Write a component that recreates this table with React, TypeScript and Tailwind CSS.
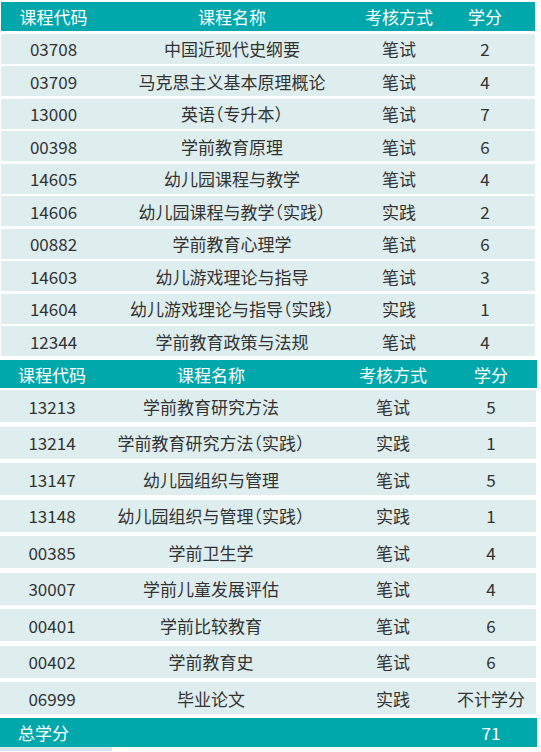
import React from 'react';

type Course = { code: string; name: string; method: string; credit: string };

const partOne: Course[] = [
    { code: '03708', name: '中国近现代史纲要', method: '笔试', credit: '2' },
    { code: '03709', name: '马克思主义基本原理概论', method: '笔试', credit: '4' },
    { code: '13000', name: '英语（专升本）', method: '笔试', credit: '7' },
    { code: '00398', name: '学前教育原理', method: '笔试', credit: '6' },
    { code: '14605', name: '幼儿园课程与教学', method: '笔试', credit: '4' },
    { code: '14606', name: '幼儿园课程与教学（实践）', method: '实践', credit: '2' },
    { code: '00882', name: '学前教育心理学', method: '笔试', credit: '6' },
    { code: '14603', name: '幼儿游戏理论与指导', method: '笔试', credit: '3' },
    { code: '14604', name: '幼儿游戏理论与指导（实践）', method: '实践', credit: '1' },
    { code: '12344', name: '学前教育政策与法规', method: '笔试', credit: '4' },
];

const partTwo: Course[] = [
    { code: '13213', name: '学前教育研究方法', method: '笔试', credit: '5' },
    { code: '13214', name: '学前教育研究方法（实践）', method: '实践', credit: '1' },
    { code: '13147', name: '幼儿园组织与管理', method: '笔试', credit: '5' },
    { code: '13148', name: '幼儿园组织与管理（实践）', method: '实践', credit: '1' },
    { code: '00385', name: '学前卫生学', method: '笔试', credit: '4' },
    { code: '30007', name: '学前儿童发展评估', method: '笔试', credit: '4' },
    { code: '00401', name: '学前比较教育', method: '笔试', credit: '6' },
    { code: '00402', name: '学前教育史', method: '笔试', credit: '6' },
    { code: '06999', name: '毕业论文', method: '实践', credit: '不计学分' },
];

const cell = 'flex items-center justify-center whitespace-nowrap';
// half-width brackets, like the source table
const nameCell = `${cell} [font-feature-settings:'halt']`;

export default function App() {
    return (
        <div
            className="w-[541px] h-[752px] bg-white overflow-hidden text-[17px] leading-none"
            style={{ fontFamily: '"Noto Sans CJK SC", "Noto Sans", sans-serif' }}
        >
            {/* First block */}
            <div className="ml-[1px] w-[534px] pt-[2px] flex flex-col gap-[2.5px]">
                <div className="grid grid-cols-[105px_252px_82px_90px] h-[29px] bg-[#00a7ab] text-white">
                    <div className={cell}>课程代码</div>
                    <div className={cell}>课程名称</div>
                    <div className={cell}>考核方式</div>
                    <div className={cell}>学分</div>
                </div>
                {partOne.map((c) => (
                    <div key={c.code} className="grid grid-cols-[105px_252px_82px_90px] h-[30px] bg-[#deeeee] text-[#333333]">
                        <div className={cell}>{c.code}</div>
                        <div className={nameCell}>{c.name}</div>
                        <div className={cell}>{c.method}</div>
                        <div className={cell}>{c.credit}</div>
                    </div>
                ))}
            </div>

            {/* Second block */}
            <div className="mt-[4px] w-[537px] flex flex-col">
                <div className="grid grid-cols-[104px_214px_150px_46px] h-[28px] bg-[#00a7ab] text-white">
                    <div className={cell}>课程代码</div>
                    <div className={cell}>课程名称</div>
                    <div className={cell}>考核方式</div>
                    <div className={cell}>学分</div>
                </div>
                <div className="mt-[2px] flex flex-col gap-[4.5px]">
                    {partTwo.map((c) => (
                        <div key={c.code} className="grid grid-cols-[104px_214px_150px_46px] h-[32px] w-[536px] bg-[#deeeee] text-[#333333]">
                            <div className={cell}>{c.code}</div>
                            <div className={nameCell}>{c.name}</div>
                            <div className={cell}>{c.method}</div>
                            <div className={cell}>{c.credit}</div>
                        </div>
                    ))}
                </div>
                <div className="mt-[3.5px] grid grid-cols-[318px_150px_46px] h-[29px] bg-[#00a7ab] text-white">
                    <div className="flex items-center pl-[18px]">总学分</div>
                    <div />
                    <div className={cell}>71</div>
                </div>
                <div className="h-[4px] w-[112px] bg-[#d3e9e9]" />
            </div>
        </div>
    );
}
